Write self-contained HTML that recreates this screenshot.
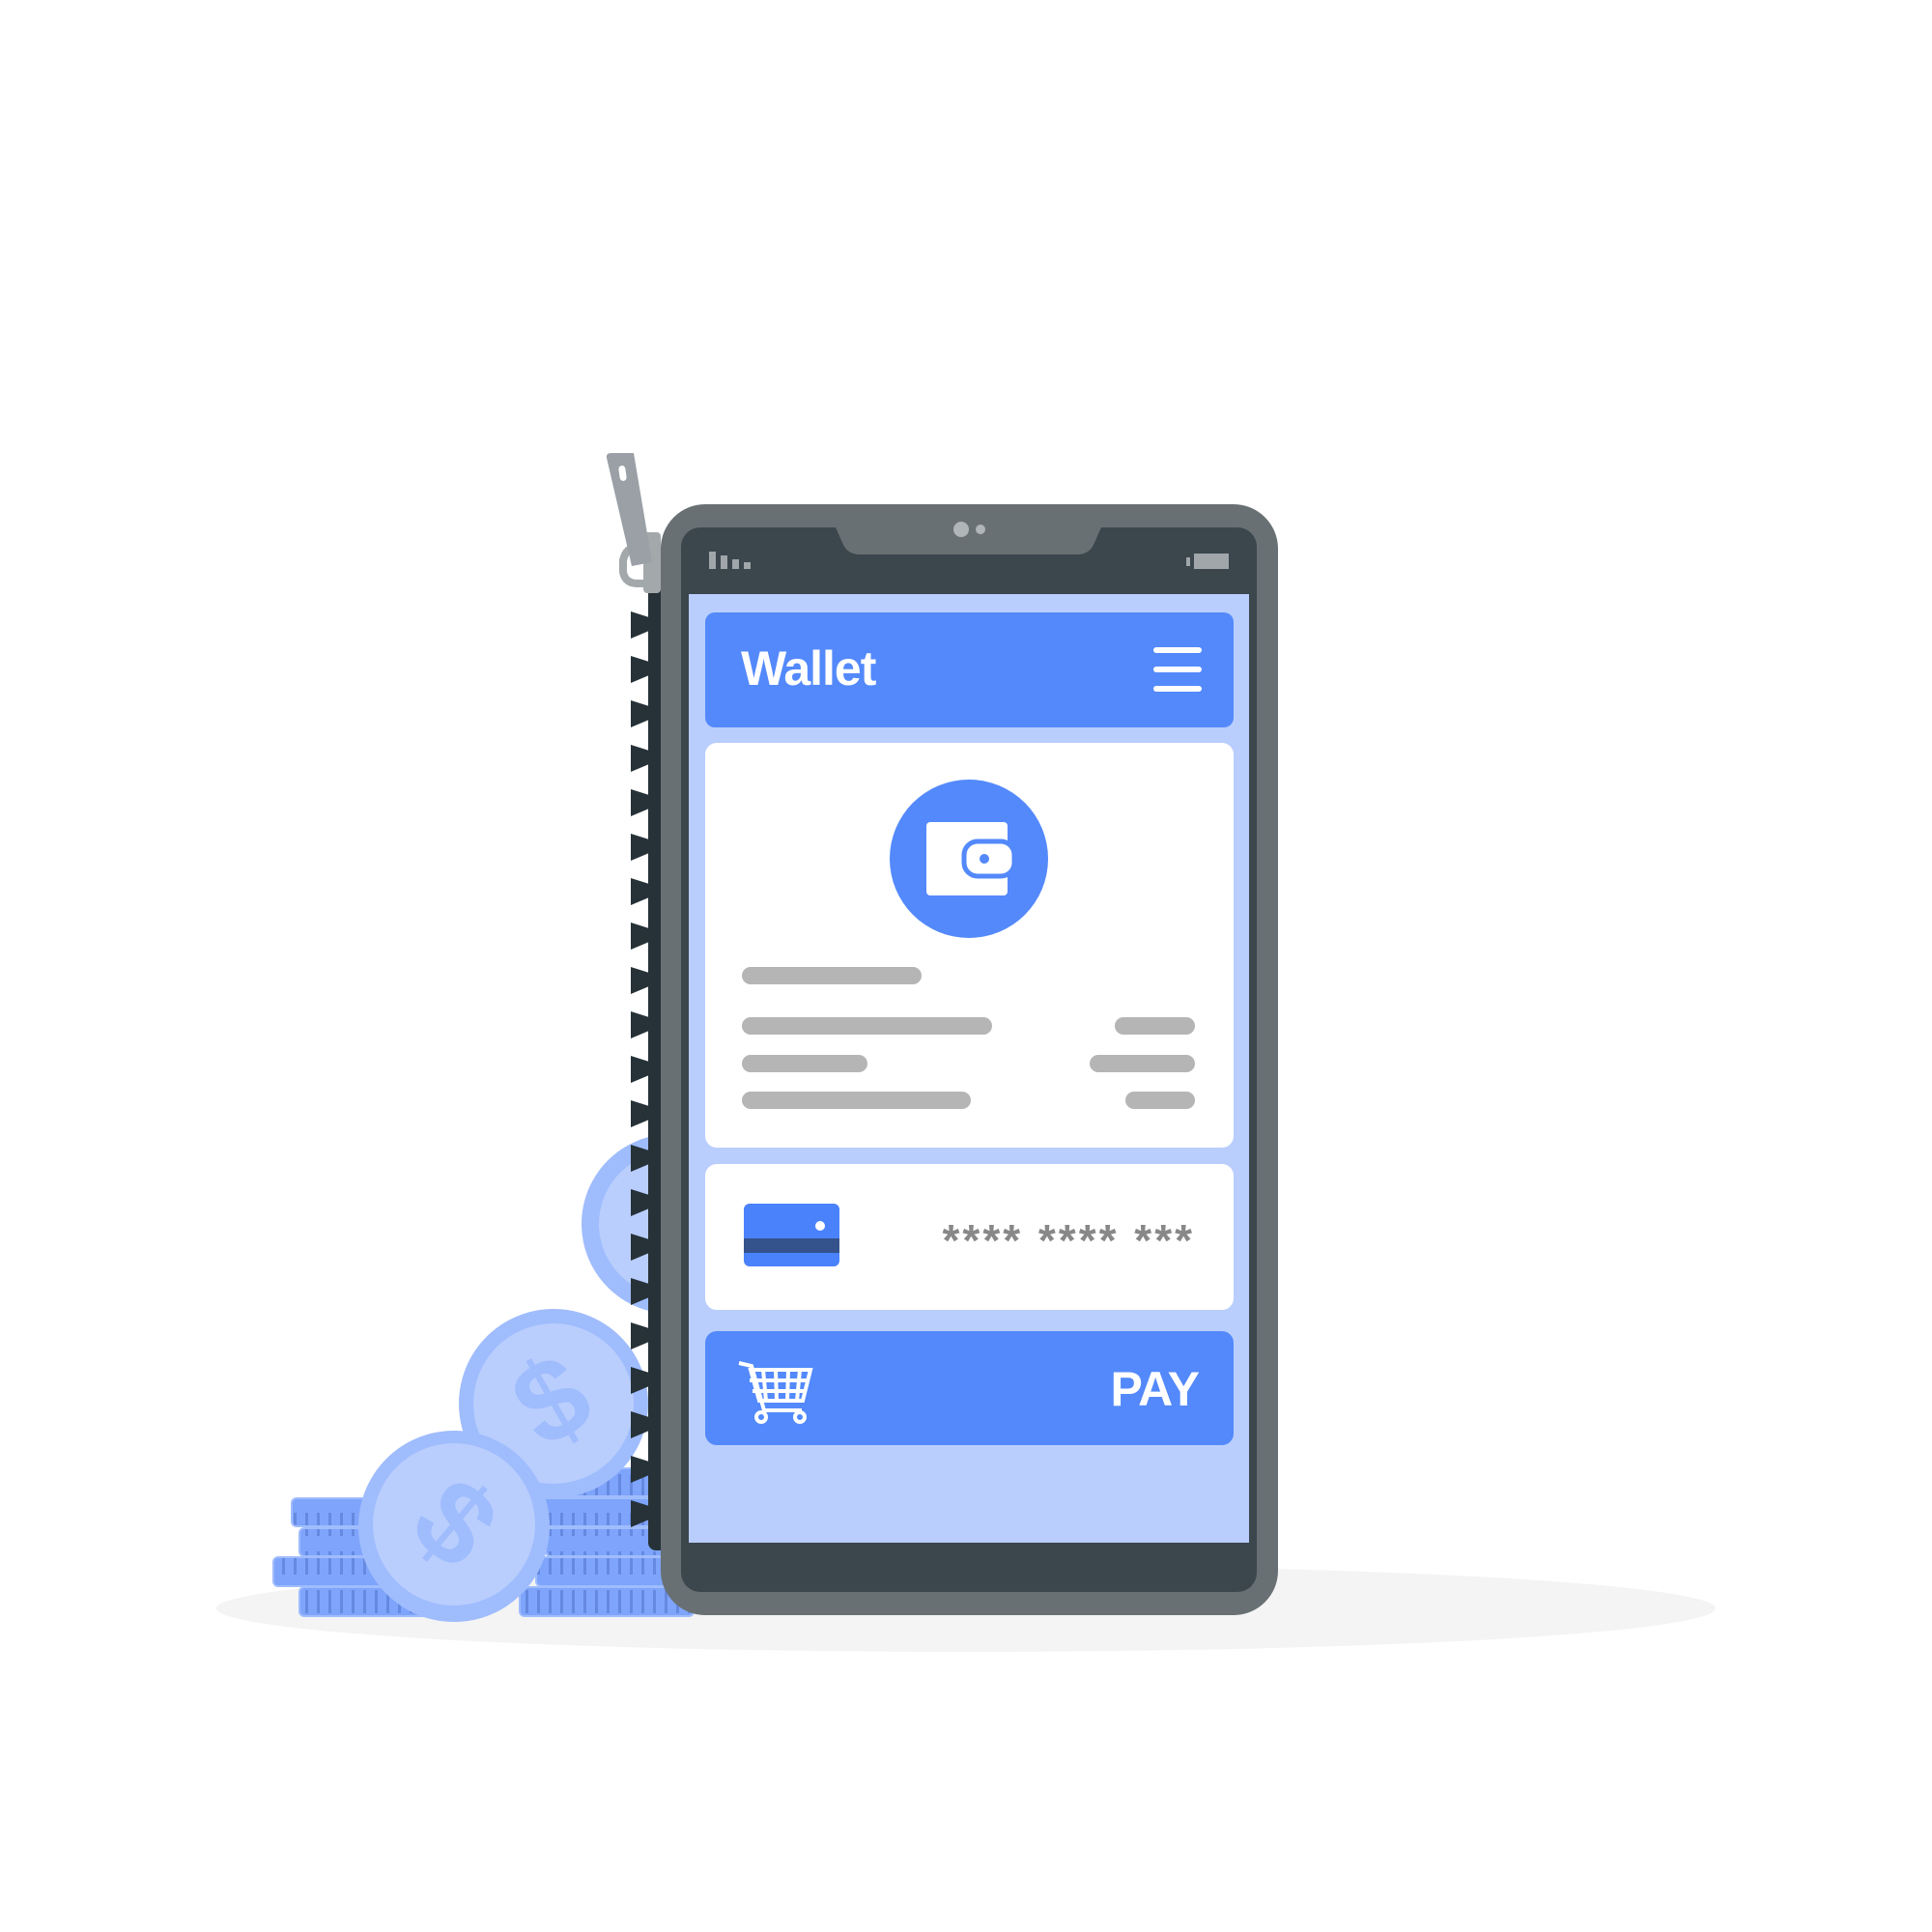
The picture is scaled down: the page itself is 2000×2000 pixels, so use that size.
<!DOCTYPE html>
<html><head><meta charset="utf-8"><style>html,body{margin:0;padding:0;background:#fff}svg{display:block}</style></head>
<body>
<svg width="2000" height="2000" viewBox="0 0 2000 2000" xmlns="http://www.w3.org/2000/svg">
<defs>
<pattern id="st" width="12" height="40" patternUnits="userSpaceOnUse"><rect width="12" height="40" fill="#7ea4fb"/><rect x="4" y="6" width="3" height="24" fill="#6689e0"/></pattern>
<g id="tooth"><polygon points="653,0 672,6 672,20 653,28" fill="#263238"/></g>
</defs>
<ellipse cx="1000" cy="1665" rx="776" ry="45" fill="#f4f4f4"/>
<!-- back coin -->
<circle cx="695" cy="1267" r="93" fill="#9fbcfd"/><circle cx="695" cy="1267" r="75" fill="#b9cefd"/>
<!-- stacks -->
<g stroke="#9fbcfd" stroke-width="2">
<rect x="302" y="1551" width="140" height="29" rx="5" fill="url(#st)"/>
<rect x="310" y="1582" width="130" height="29" rx="5" fill="url(#st)"/>
<rect x="283" y="1612" width="160" height="30" rx="5" fill="url(#st)"/>
<rect x="310" y="1643" width="140" height="30" rx="5" fill="url(#st)"/>
<rect x="560" y="1520" width="140" height="29" rx="5" fill="url(#st)"/>
<rect x="555" y="1551" width="150" height="29" rx="5" fill="url(#st)"/>
<rect x="565" y="1582" width="140" height="29" rx="5" fill="url(#st)"/>
<rect x="555" y="1612" width="160" height="30" rx="5" fill="url(#st)"/>
<rect x="538" y="1643" width="180" height="30" rx="5" fill="url(#st)"/>
</g>
<!-- coins -->
<g>
<circle cx="573" cy="1453" r="98" fill="#9fbcfd"/><circle cx="573" cy="1453" r="83" fill="#b9cefd"/>
<text x="573" y="1490" font-family="Liberation Sans,sans-serif" font-weight="bold" font-size="120" fill="#9fbcfd" text-anchor="middle" transform="rotate(-30 573 1453)">$</text>
<circle cx="470" cy="1580" r="99" fill="#9fbcfd"/><circle cx="470" cy="1578" r="84" fill="#b9cefd"/>
<text x="470" y="1617" font-family="Liberation Sans,sans-serif" font-weight="bold" font-size="120" fill="#9fbcfd" text-anchor="middle" transform="rotate(40 470 1578)">$</text>
</g>
<!-- zipper column -->
<rect x="671" y="600" width="20" height="1005" rx="8" fill="#263238"/>
<use href="#tooth" y="633"/><use href="#tooth" y="679"/><use href="#tooth" y="725"/><use href="#tooth" y="771"/><use href="#tooth" y="817"/><use href="#tooth" y="863"/><use href="#tooth" y="909"/><use href="#tooth" y="955"/><use href="#tooth" y="1001"/><use href="#tooth" y="1047"/><use href="#tooth" y="1093"/><use href="#tooth" y="1139"/><use href="#tooth" y="1185"/><use href="#tooth" y="1231"/><use href="#tooth" y="1277"/><use href="#tooth" y="1323"/><use href="#tooth" y="1369"/><use href="#tooth" y="1415"/><use href="#tooth" y="1461"/><use href="#tooth" y="1507"/><use href="#tooth" y="1553"/>
<!-- phone -->
<rect x="684" y="522" width="639" height="1150" rx="46" fill="#687073"/>
<rect x="705" y="546" width="596" height="1102" rx="20" fill="#3b464d"/>
<path d="M865 546 L873 564 Q878 574 890 574 L1115 574 Q1127 574 1132 564 L1140 546 Z" fill="#687073"/>
<circle cx="995" cy="548" r="8" fill="#b0b5b8"/><circle cx="1015" cy="548" r="5" fill="#b0b5b8"/>
<g fill="#a0a6a9"><rect x="734" y="571" width="7" height="18"/><rect x="746" y="575" width="7" height="14"/><rect x="758" y="579" width="7" height="10"/><rect x="770" y="582" width="7" height="7"/>
<rect x="1228" y="577" width="4" height="9"/><rect x="1236" y="573" width="36" height="16"/></g>
<rect x="713" y="615" width="580" height="982" fill="#b9cefd"/>
<rect x="730" y="634" width="547" height="119" rx="10" fill="#5389fb"/>
<text x="767" y="709" font-family="Liberation Sans,sans-serif" font-weight="bold" font-size="50" fill="#fff" letter-spacing="-1">Wallet</text>
<g fill="#fff"><rect x="1194" y="670" width="50" height="6" rx="3"/><rect x="1194" y="690" width="50" height="6" rx="3"/><rect x="1194" y="710" width="50" height="6" rx="3"/></g>
<rect x="730" y="769" width="547" height="419" rx="12" fill="#fff"/>
<circle cx="1003" cy="889" r="82" fill="#5389fb"/>
<rect x="959" y="851" width="84" height="76" rx="4" fill="#fff"/>
<rect x="998" y="871" width="52" height="36" rx="14" fill="#fff" stroke="#5389fb" stroke-width="5"/>
<circle cx="1019" cy="889" r="5" fill="#5389fb"/>
<g fill="#b5b5b5">
<rect x="768" y="1001" width="186" height="18" rx="9"/>
<rect x="768" y="1053" width="259" height="18" rx="9"/><rect x="1154" y="1053" width="83" height="18" rx="9"/>
<rect x="768" y="1092" width="130" height="18" rx="9"/><rect x="1128" y="1092" width="109" height="18" rx="9"/>
<rect x="768" y="1130" width="237" height="18" rx="9"/><rect x="1165" y="1130" width="72" height="18" rx="9"/>
</g>
<rect x="730" y="1205" width="547" height="151" rx="12" fill="#fff"/>
<rect x="770" y="1246" width="99" height="65" rx="6" fill="#4a82fb"/>
<rect x="770" y="1282" width="99" height="15" fill="#34528c"/>
<circle cx="849" cy="1269" r="5" fill="#fff"/>
<text x="1237" y="1300" font-family="Liberation Sans,sans-serif" font-weight="bold" font-size="46" fill="#888" text-anchor="end" letter-spacing="3">**** **** ***</text>
<rect x="730" y="1378" width="547" height="118" rx="12" fill="#5389fb"/>
<text x="1241" y="1455" font-family="Liberation Sans,sans-serif" font-weight="bold" font-size="50" fill="#fff" text-anchor="end" letter-spacing="-1">PAY</text>
<g stroke="#fff" stroke-width="4" fill="none">
<path d="M765 1411 L778 1414 L791 1460 L830 1460"/>
<path d="M777 1418 L839 1418 L831 1450 L786 1450 Z"/>
<path d="M776 1429 L836 1429 M779 1440 L833 1440 M790 1418 L793 1450 M803 1418 L804 1450 M816 1418 L815 1450 M828 1418 L825 1450"/>
<circle cx="788" cy="1467" r="5"/><circle cx="828" cy="1467" r="5"/>
</g>
<!-- zipper pull -->
<rect x="666" y="551" width="18" height="63" rx="4" fill="#a3a8ab"/>
<path d="M667 572 Q650 560 645 580 L645 592 Q647 604 660 604 L672 604" fill="none" stroke="#a3a8ab" stroke-width="8"/>
<path d="M628 474 Q627 469 633 469 L656 469 L675 582 L654 586 Z" fill="#9aa0a6"/>
<rect x="641" y="482" width="7" height="16" rx="3.5" fill="#fff" transform="rotate(-8 644 490)"/>
</svg>
</body></html>
